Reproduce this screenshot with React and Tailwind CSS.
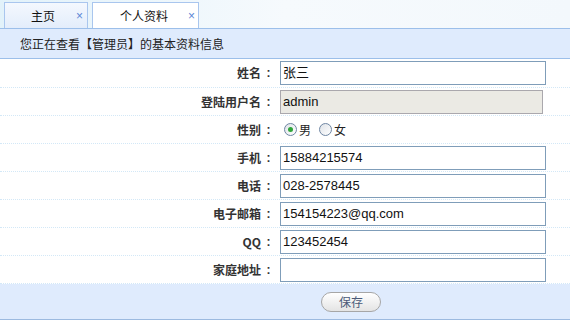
import React from "react";

const font = { fontFamily: '"Liberation Sans","Noto Sans CJK SC",sans-serif' };
const cjk = { fontFamily: '"Noto Sans CJK SC","Liberation Sans",sans-serif' };

function Row({ label, children, first }) {
  return (
    <div className={`flex items-center border-b border-dotted border-[#d3e8f7] ${first ? "h-[29px]" : "h-[28px]"}`}>
      <div className="flex w-[276px] shrink-0 items-center justify-end text-[12px] font-bold text-[#333]" style={cjk}>
        <span>{label}</span>
        <span className="inline-block w-[15px] text-center" style={{ fontFamily: '"Liberation Sans",sans-serif' }}>:</span>
      </div>
      <div className="ml-[4px] flex items-center">{children}</div>
    </div>
  );
}

function Input({ value, disabled }) {
  return (
    <div
      className={`flex h-[24px] items-center px-[2px] text-[13px] text-[#111] ${
        disabled ? "w-[263px] border border-[#aaa8ad] bg-[#ebeae4]" : "w-[266px] border border-[#7f9db9] bg-white"
      }`}
    >
      {value}
    </div>
  );
}

function Radio({ checked, label }) {
  return (
    <div className="flex items-center">
      <span className="flex h-[13px] w-[13px] items-center justify-center rounded-full border border-[#6f86a3] bg-gradient-to-br from-[#dfe3e8] to-white">
        {checked && <span className="h-[5px] w-[5px] rounded-full bg-[#2fa53a]" />}
      </span>
      <span className="ml-[2px] text-[12px] text-[#222]" style={cjk}>{label}</span>
    </div>
  );
}

export default function App() {
  return (
    <div className="h-[326px] w-[570px] overflow-hidden bg-white" style={font}>
      <div className="flex h-[28px] items-end bg-gradient-to-r from-[#e2f2fa] via-[#f6fafd] to-[#f3f8fc] pl-[4px]">
        <div className="flex h-[26px] w-[84px] items-center border border-b-0 border-[#a9c6ee] bg-gradient-to-b from-[#f4f8fe] to-[#e3edfb]">
          <span className="ml-[26px] text-[12px] text-[#111]" style={cjk}>主页</span>
          <span className="ml-[21px] text-[12px] leading-none text-[#5a86d6]">×</span>
        </div>
        <div className="ml-[4px] flex h-[26px] w-[107px] items-center border border-b-0 border-[#a9c6ee] bg-white">
          <span className="ml-[27px] text-[12px] text-[#111]" style={cjk}>个人资料</span>
          <span className="ml-[20px] text-[12px] leading-none text-[#5a86d6]">×</span>
        </div>
      </div>
      <div className="flex h-[31px] items-center border-y border-[#9cbfea] bg-[#dfebfd] pl-[20px] text-[12px] text-[#222]" style={cjk}>
        您正在查看【管理员】的基本资料信息
      </div>
      <Row label="姓名" first>
        <Input value="张三" />
      </Row>
      <Row label="登陆用户名">
        <Input value="admin" disabled />
      </Row>
      <Row label="性别">
        <div className="ml-[4px] flex items-center gap-[8px]">
          <Radio checked label="男" />
          <Radio label="女" />
        </div>
      </Row>
      <Row label="手机">
        <Input value="15884215574" />
      </Row>
      <Row label="电话">
        <Input value="028-2578445" />
      </Row>
      <Row label="电子邮箱">
        <Input value="154154223@qq.com" />
      </Row>
      <Row label="QQ">
        <Input value="123452454" />
      </Row>
      <Row label="家庭地址">
        <Input value="" />
      </Row>
      <div className="flex h-[36px] items-center border-b border-[#9cbae0] bg-[#dfebfd]">
        <button className="ml-[321px] flex h-[20px] w-[60px] items-center justify-center rounded-full border border-[#a6a6a6] bg-gradient-to-b from-white to-[#e4e4e4] text-[12px] text-[#4a5a78]" style={cjk}>
          保存
        </button>
      </div>
    </div>
  );
}
